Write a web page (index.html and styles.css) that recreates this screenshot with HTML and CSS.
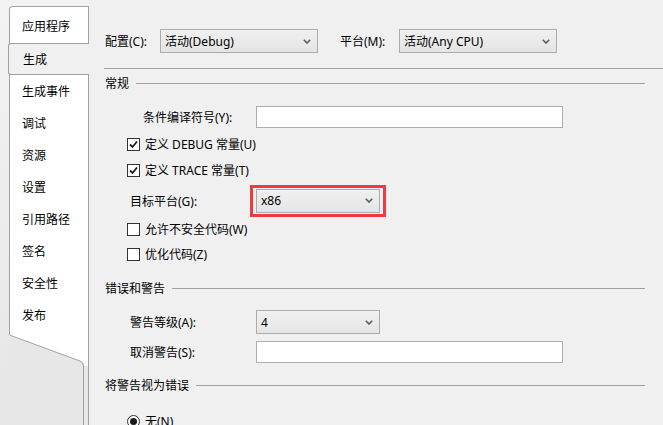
FILE: index.html
```html
<!DOCTYPE html>
<html lang="zh-CN">
<head>
    <meta charset="UTF-8">
    <title>项目属性 - 生成</title>
    <link rel="stylesheet" href="styles.css">
</head>
<body>
    <div class="window">
        <!-- 左侧页签 -->
        <div class="sidebar">
            <div class="tabs">
                <div class="tab first">应用程序</div>
                <div class="tab active">生成</div>
                <div class="tab">生成事件</div>
                <div class="tab">调试</div>
                <div class="tab">资源</div>
                <div class="tab">设置</div>
                <div class="tab">引用路径</div>
                <div class="tab">签名</div>
                <div class="tab">安全性</div>
                <div class="tab">发布</div>
            </div>
            <svg class="tab-tail" width="80" height="94" viewBox="0 0 80 94">
                <rect x="0" y="0" width="80" height="94" fill="#e7e7e7"/>
                <path d="M0 0 H79 V35 H75 Q74.5 31 71 30 L1 4.5 V0 Z" fill="#fff"/>
                <path d="M0.5 0 V4 L71 30 Q74.5 31 74.5 35 V94" fill="none" stroke="#a0a0a0"/>
                <path d="M79.5 0 V94" stroke="#a0a0a0"/>
            </svg>
        </div>

        <!-- 右侧内容 -->
        <div class="content">
            <div class="toolbar">
                <span class="tool-label">配置(C):</span>
                <div class="dropdown wide">
                    <span>活动(Debug)</span>
                    <svg class="chevron" width="8" height="5" viewBox="0 0 8 5"><path d="M0.8 0.8 L4 4 L7.2 0.8" fill="none" stroke="#5a5a5a" stroke-width="1.6"/></svg>
                </div>
                <span class="tool-label second">平台(M):</span>
                <div class="dropdown wide">
                    <span>活动(Any CPU)</span>
                    <svg class="chevron" width="8" height="5" viewBox="0 0 8 5"><path d="M0.8 0.8 L4 4 L7.2 0.8" fill="none" stroke="#5a5a5a" stroke-width="1.6"/></svg>
                </div>
            </div>

            <div class="rule"></div>

            <div class="group-title first-group"><span>常规</span></div>

            <div class="field indent row-symbols">
                <span class="field-label">条件编译符号(Y):</span>
                <div class="textbox"></div>
            </div>
            <div class="check-row row-debug">
                <span class="checkbox checked"><svg width="11" height="11" viewBox="0 0 11 11"><path d="M2 5.5 L4.5 8 L9 2.5" fill="none" stroke="#1a1a1a" stroke-width="1.8"/></svg></span>
                <span>定义 DEBUG 常量(U)</span>
            </div>
            <div class="check-row">
                <span class="checkbox checked"><svg width="11" height="11" viewBox="0 0 11 11"><path d="M2 5.5 L4.5 8 L9 2.5" fill="none" stroke="#1a1a1a" stroke-width="1.8"/></svg></span>
                <span>定义 TRACE 常量(T)</span>
            </div>
            <div class="field row-target">
                <span class="field-label">目标平台(G):</span>
                <div class="highlight">
                    <div class="dropdown narrow">
                        <span>x86</span>
                        <svg class="chevron" width="8" height="5" viewBox="0 0 8 5"><path d="M0.8 0.8 L4 4 L7.2 0.8" fill="none" stroke="#5a5a5a" stroke-width="1.6"/></svg>
                    </div>
                </div>
            </div>
            <div class="check-row row-unsafe">
                <span class="checkbox"></span>
                <span>允许不安全代码(W)</span>
            </div>
            <div class="check-row">
                <span class="checkbox"></span>
                <span>优化代码(Z)</span>
            </div>

            <div class="group-title errors-group"><span>错误和警告</span></div>

            <div class="field row-level">
                <span class="field-label">警告等级(A):</span>
                <div class="dropdown narrow">
                    <span>4</span>
                    <svg class="chevron" width="8" height="5" viewBox="0 0 8 5"><path d="M0.8 0.8 L4 4 L7.2 0.8" fill="none" stroke="#5a5a5a" stroke-width="1.6"/></svg>
                </div>
            </div>
            <div class="field row-suppress">
                <span class="field-label">取消警告(S):</span>
                <div class="textbox"></div>
            </div>

            <div class="group-title treat-group"><span>将警告视为错误</span></div>

            <div class="check-row row-radio">
                <span class="radio"><span class="dot"></span></span>
                <span>无(N)</span>
            </div>
        </div>
    </div>
</body>
</html>
```

FILE: styles.css
```css
/* 全局 */
* {
    margin: 0;
    padding: 0;
    box-sizing: border-box;
}

body {
    font-family: "Noto Sans", "Noto Sans CJK SC", sans-serif;
    font-size: 12px;
    color: #000;
    background: #f0f0f0;
    width: 663px;
    height: 425px;
    overflow: hidden;
}

.window {
    display: flex;
    height: 425px;
}

/* 左侧页签 */
.sidebar {
    width: 89px;
    padding-top: 6px;
    padding-left: 9px;
    display: flex;
    flex-direction: column;
    background: linear-gradient(#f3f3f3, #e6e6e6);
}

.tabs {
    background: #fff;
    border: 1px solid #a0a0a0;
    border-bottom: none;
    border-radius: 4px 0 0 0;
}

.tab {
    height: 32px;
    display: flex;
    align-items: center;
    padding-left: 12px;
}

.tab.first {
    height: 36px;
    padding-top: 2px;
}

.tab.active {
    height: 32px;
    margin-left: -2px;
    margin-right: -1px;
    padding-left: 14px;
    background: #f0f0f0;
    border: 1px solid #a0a0a0;
    border-right: none;
    border-radius: 3px 0 0 3px;
}

.tab-tail {
    display: block;
    flex-shrink: 0;
}

/* 右侧内容 */
.content {
    flex: 1;
    padding-top: 29px;
    padding-left: 16px;
    display: flex;
    flex-direction: column;
}

.content > * {
    flex-shrink: 0;
}

.toolbar {
    display: flex;
    align-items: center;
    height: 24px;
}

.tool-label {
    width: 55px;
}

.tool-label.second {
    margin-left: 22px;
    width: 59px;
}

.dropdown {
    height: 24px;
    border: 1px solid #acacac;
    background: linear-gradient(#f0f0f0, #e5e5e5);
    display: flex;
    align-items: center;
    justify-content: space-between;
    padding-left: 4px;
    padding-right: 6px;
}

.dropdown.wide {
    width: 158px;
}

.dropdown.narrow {
    width: 124px;
}

.chevron {
    display: block;
}

.rule {
    height: 1px;
    background: #a0a0a0;
    margin-top: 15px;
    margin-left: -1px;
}

/* 分组标题 */
.group-title {
    display: flex;
    align-items: center;
    height: 16px;
    margin-right: 18px;
}

.group-title::after {
    content: "";
    flex: 1;
    height: 1px;
    background: #a0a0a0;
    margin-left: 7px;
}

.first-group { margin-top: 6px; }
.errors-group { margin-top: 13px; }
.treat-group { margin-top: 14px; }

/* 表单行 */
.field {
    display: flex;
    align-items: center;
    padding-left: 25px;
}

.field-label {
    width: 126px;
}

.field.indent {
    padding-left: 38px;
}

.field.indent .field-label {
    width: 113px;
}

.textbox {
    width: 307px;
    height: 22px;
    background: #fff;
    border: 1px solid #abadb3;
}

.row-symbols { margin-top: 15px; height: 22px; }
.row-target { margin-top: 1px; height: 33px; }
.row-level { margin-top: 14px; height: 24px; }
.row-suppress { margin-top: 7px; height: 22px; }

.highlight {
    border: 3px solid #ef3b3d;
    padding: 1px 3px;
    margin-left: -6px;
}

.check-row {
    display: flex;
    align-items: center;
    height: 26px;
    padding-left: 22px;
    gap: 5px;
}

.row-debug { margin-top: 3px; }
.row-unsafe { height: 24px; }
.row-radio { margin-top: 20px; height: 16px; }

.checkbox {
    width: 13px;
    height: 13px;
    border: 1px solid #333;
    background: #fff;
    display: flex;
    align-items: center;
    justify-content: center;
}

.radio {
    width: 13px;
    height: 13px;
    border: 1px solid #333;
    border-radius: 50%;
    background: #fff;
    display: flex;
    align-items: center;
    justify-content: center;
}

.radio .dot {
    width: 7px;
    height: 7px;
    border-radius: 50%;
    background: #1a1a1a;
}
```
